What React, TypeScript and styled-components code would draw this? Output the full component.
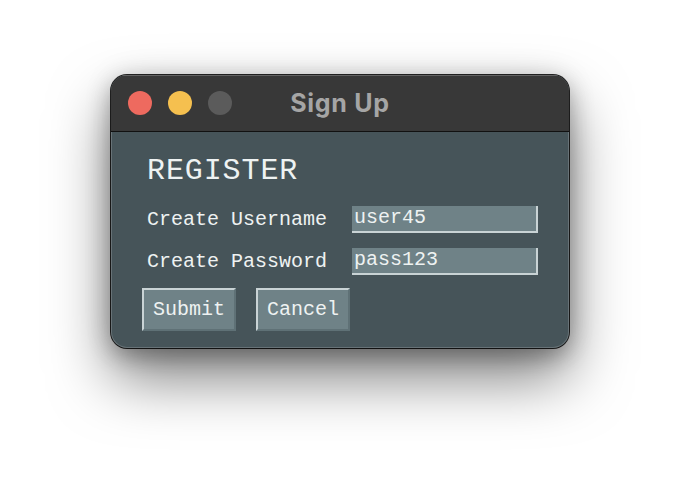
import React from "react";
import styled, { createGlobalStyle } from "styled-components";

const Global = createGlobalStyle`
  html, body { margin: 0; padding: 0; background: #ffffff; }
  body { font-family: "Liberation Mono", "Courier New", monospace; }
`;

const Page = styled.div`
  width: 680px;
  height: 496px;
  padding: 75px 0 0 111px;
  box-sizing: border-box;
  background: #ffffff;
`;

const Window = styled.div`
  width: 458px;
  height: 273px;
  border-radius: 16px;
  overflow: hidden;
  display: flex;
  flex-direction: column;
  background: #465459;
  box-shadow: 0 0 0 1px rgba(0, 0, 0, 0.85), inset 0 0 0 1px rgba(255, 255, 255, 0.18),
    0 30px 60px rgba(0, 0, 0, 0.5), 0 8px 22px rgba(0, 0, 0, 0.25), 0 0 30px rgba(0, 0, 0, 0.1);
`;

const TitleBar = styled.div`
  height: 57px;
  flex: none;
  position: relative;
  display: flex;
  align-items: center;
  gap: 16px;
  padding-left: 17px;
  background: #383838;
  border-bottom: 1px solid #111111;
  box-sizing: border-box;
  box-shadow: inset 0 1px 0 rgba(255, 255, 255, 0.22);
`;

const Light = styled.span<{ $color: string }>`
  width: 24px;
  height: 24px;
  border-radius: 50%;
  background: ${(p) => p.$color};
`;

const Title = styled.div`
  position: absolute;
  left: 0;
  right: 0;
  top: 0;
  bottom: 0;
  display: flex;
  align-items: center;
  justify-content: center;
  font-family: "Inter", "Liberation Sans", sans-serif;
  font-weight: 700;
  font-size: 25px;
  letter-spacing: 0.7px;
  color: #a5a5a5;
  pointer-events: none;
`;

const Body = styled.div`
  flex: 1;
  padding: 22px 0 0 31px;
  display: flex;
  flex-direction: column;
`;

const Heading = styled.div`
  font-family: "Liberation Mono", "Courier New", monospace;
  font-size: 30px;
  letter-spacing: 0.9px;
  line-height: 34px;
  color: #eef2f2;
  margin-left: 5px;
`;

const Form = styled.div`
  margin-top: 18px;
  margin-left: 5px;
  display: grid;
  grid-template-columns: 179px 186px;
  column-gap: 26px;
  row-gap: 15px;
  align-items: center;
`;

const Label = styled.label`
  font-family: "Liberation Mono", "Courier New", monospace;
  font-size: 20px;
  color: #eef2f2;
  white-space: nowrap;
`;

const Field = styled.div`
  height: 27px;
  box-sizing: border-box;
  background: #6f8287;
  border-right: 2px solid #c9d3d5;
  border-bottom: 2px solid #c9d3d5;
  font-family: "Liberation Mono", "Courier New", monospace;
  font-size: 20px;
  line-height: 24px;
  color: #eef2f2;
  padding-left: 2px;
`;

const Buttons = styled.div`
  margin-top: 13px;
  display: flex;
  gap: 20px;
`;

const Button = styled.button`
  width: 94px;
  height: 43px;
  box-sizing: border-box;
  background: #6f8287;
  border: none;
  border-top: 2px solid #c9d3d5;
  border-left: 2px solid #c9d3d5;
  border-right: 2px solid #5f7176;
  border-bottom: 2px solid #5f7176;
  font-family: "Liberation Mono", "Courier New", monospace;
  font-size: 20px;
  color: #eef2f2;
  padding: 0;
`;

export default function App() {
  return (
    <Page>
      <Global />
      <Window>
        <TitleBar>
          <Light $color="#ee6a5f" />
          <Light $color="#f5c04f" />
          <Light $color="#5b5b5b" />
          <Title>Sign Up</Title>
        </TitleBar>
        <Body>
          <Heading>REGISTER</Heading>
          <Form>
            <Label>Create Username</Label>
            <Field>user45</Field>
            <Label>Create Password</Label>
            <Field>pass123</Field>
          </Form>
          <Buttons>
            <Button>Submit</Button>
            <Button>Cancel</Button>
          </Buttons>
        </Body>
      </Window>
    </Page>
  );
}
